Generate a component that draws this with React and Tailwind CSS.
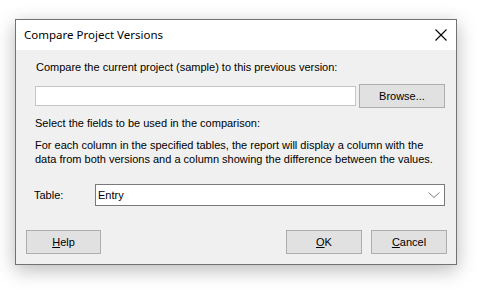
export default function App() {
  const body = { fontFamily: '"Liberation Sans", Arial, sans-serif' };
  return (
    <div className="w-[477px] h-[290px] bg-white overflow-hidden pt-[19px] pl-[15px]">
      <div className="w-[442px] h-[246px] border border-[#727272] flex flex-col shadow-[0_5px_18px_rgba(0,0,0,0.28)]">
        <div className="h-[30px] bg-white flex items-center justify-between pl-[8px] pr-[9px]">
          <span className="text-[11.5px] text-black leading-none" style={{ fontFamily: '"Noto Sans", sans-serif' }}>
            Compare Project Versions
          </span>
          <svg width="12" height="12" viewBox="0 0 12 12" className="mb-[1px]">
            <path d="M0.5 0.5 L11.5 11.5 M11.5 0.5 L0.5 11.5" stroke="#000" strokeWidth="1.1" fill="none" />
          </svg>
        </div>
        <div className="flex-1 bg-[#f0f0f0] flex flex-col text-[11px] text-black leading-[13px]" style={body}>
          <div className="mt-[11px] pl-[20px]">Compare the current project (sample) to this previous version:</div>
          <div className="mt-[10px] flex items-center pl-[19px]">
            <div className="w-[321px] h-[20px] bg-white border border-[#c6c6c6]" />
            <div className="ml-[3px] w-[86px] h-[24px] bg-[#e1e1e1] border border-[#adadad] flex items-center justify-center">
              Browse...
            </div>
          </div>
          <div className="mt-[9px] pl-[19px]">Select the fields to be used in the comparison:</div>
          <div className="mt-[8px] pl-[19px] leading-[14px]">
            For each column in the specified tables, the report will display a column with the
            <br />
            data from both versions and a column showing the difference between the values.
          </div>
          <div className="mt-[18px] flex items-center">
            <div className="pl-[18px] w-[79px]">Table:</div>
            <div className="w-[350px] h-[22px] bg-white border border-[#7a7a7a] flex items-center justify-between pl-[2px] pr-[4px]">
              <span>Entry</span>
              <svg width="12" height="6" viewBox="0 0 12 6">
                <path d="M0.5 0.5 L6 5.5 L11.5 0.5" stroke="#808080" strokeWidth="1" fill="none" />
              </svg>
            </div>
          </div>
          <div className="mt-[24px] flex items-center">
            <div className="ml-[10px] w-[75px] h-[24px] bg-[#e1e1e1] border border-[#adadad] flex items-center justify-center">
              <span><u>H</u>elp</span>
            </div>
            <div className="ml-[185px] w-[76px] h-[24px] bg-[#e1e1e1] border border-[#adadad] flex items-center justify-center">
              <span><u>O</u>K</span>
            </div>
            <div className="ml-[9px] w-[76px] h-[24px] bg-[#e1e1e1] border border-[#adadad] flex items-center justify-center">
              <span><u>C</u>ancel</span>
            </div>
          </div>
        </div>
      </div>
    </div>
  );
}
